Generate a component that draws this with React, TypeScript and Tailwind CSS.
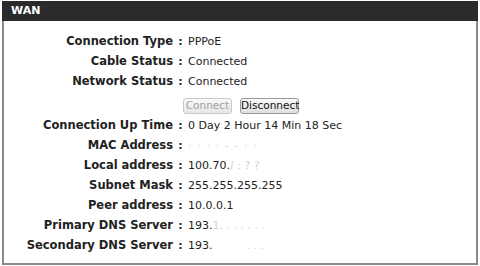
import React from "react";

interface Row {
  label: string;
  value: React.ReactNode;
}

const rows: Row[] = [
  { label: "Connection Type", value: "PPPoE" },
  { label: "Cable Status", value: "Connected" },
  { label: "Network Status", value: "Connected" },
];

// values that were blurred out in the original are shown as faint dots
const rows2: Row[] = [
  { label: "Connection Up Time", value: "0 Day 2 Hour 14 Min 18 Sec" },
  { label: "MAC Address", value: <span className="text-gray-300 tracking-widest">· · · · - - · ·</span> },
  { label: "Local address", value: <span>100.70.<span className="text-gray-300">/ : ? ?</span></span> },
  { label: "Subnet Mask", value: "255.255.255.255" },
  { label: "Peer address", value: "10.0.0.1" },
  { label: "Primary DNS Server", value: <span>193.<span className="text-gray-300">1. . . . . . .</span></span> },
  { label: "Secondary DNS Server", value: <span>193.<span className="text-gray-300 pl-[34px]">. . .</span></span> },
];

function InfoRow({ label, value }: Row) {
  return (
    <div className="flex h-5 items-center">
      <div className="w-[169px] text-right font-bold text-[11.5px]">{label}</div>
      <div className="w-[15px] text-center font-bold">:</div>
      <div>{value}</div>
    </div>
  );
}

export default function App() {
  return (
    <div
      className="w-[480px] h-[266px] bg-white text-[11px] text-[#222]"
      style={{ fontFamily: '"DejaVu Sans", Verdana, sans-serif' }}
    >
      <div className="pt-[1px] pl-[2px] pr-[2px] h-[265px] flex flex-col">
        <div className="h-5 bg-[#2b2b2b] text-white font-bold text-[11px] flex items-center pl-[9px]">
          WAN
        </div>
        <div className="flex-1 border-l-2 border-r-2 border-b-2 border-[#8a8a8a] pt-[11px]">
          {rows.map((r) => (
            <InfoRow key={r.label} {...r} />
          ))}
          <div className="flex h-[24px] items-center gap-[8px] pl-[179px] pt-[3px]">
            <button
              disabled
              className="h-[16px] w-[49px] border border-[#c8c8c8] bg-gradient-to-b from-[#fafafa] to-[#e6e6e6] text-[#a0a0a0] text-[10.5px] leading-none rounded-[3px]"
            >
              Connect
            </button>
            <button className="h-[16px] w-[59px] border border-[#9a9a9a] bg-gradient-to-b from-[#fafafa] to-[#dedede] text-[#111] text-[10.5px] leading-none rounded-[3px]">
              Disconnect
            </button>
          </div>
          {rows2.map((r) => (
            <InfoRow key={r.label} {...r} />
          ))}
        </div>
      </div>
    </div>
  );
}
